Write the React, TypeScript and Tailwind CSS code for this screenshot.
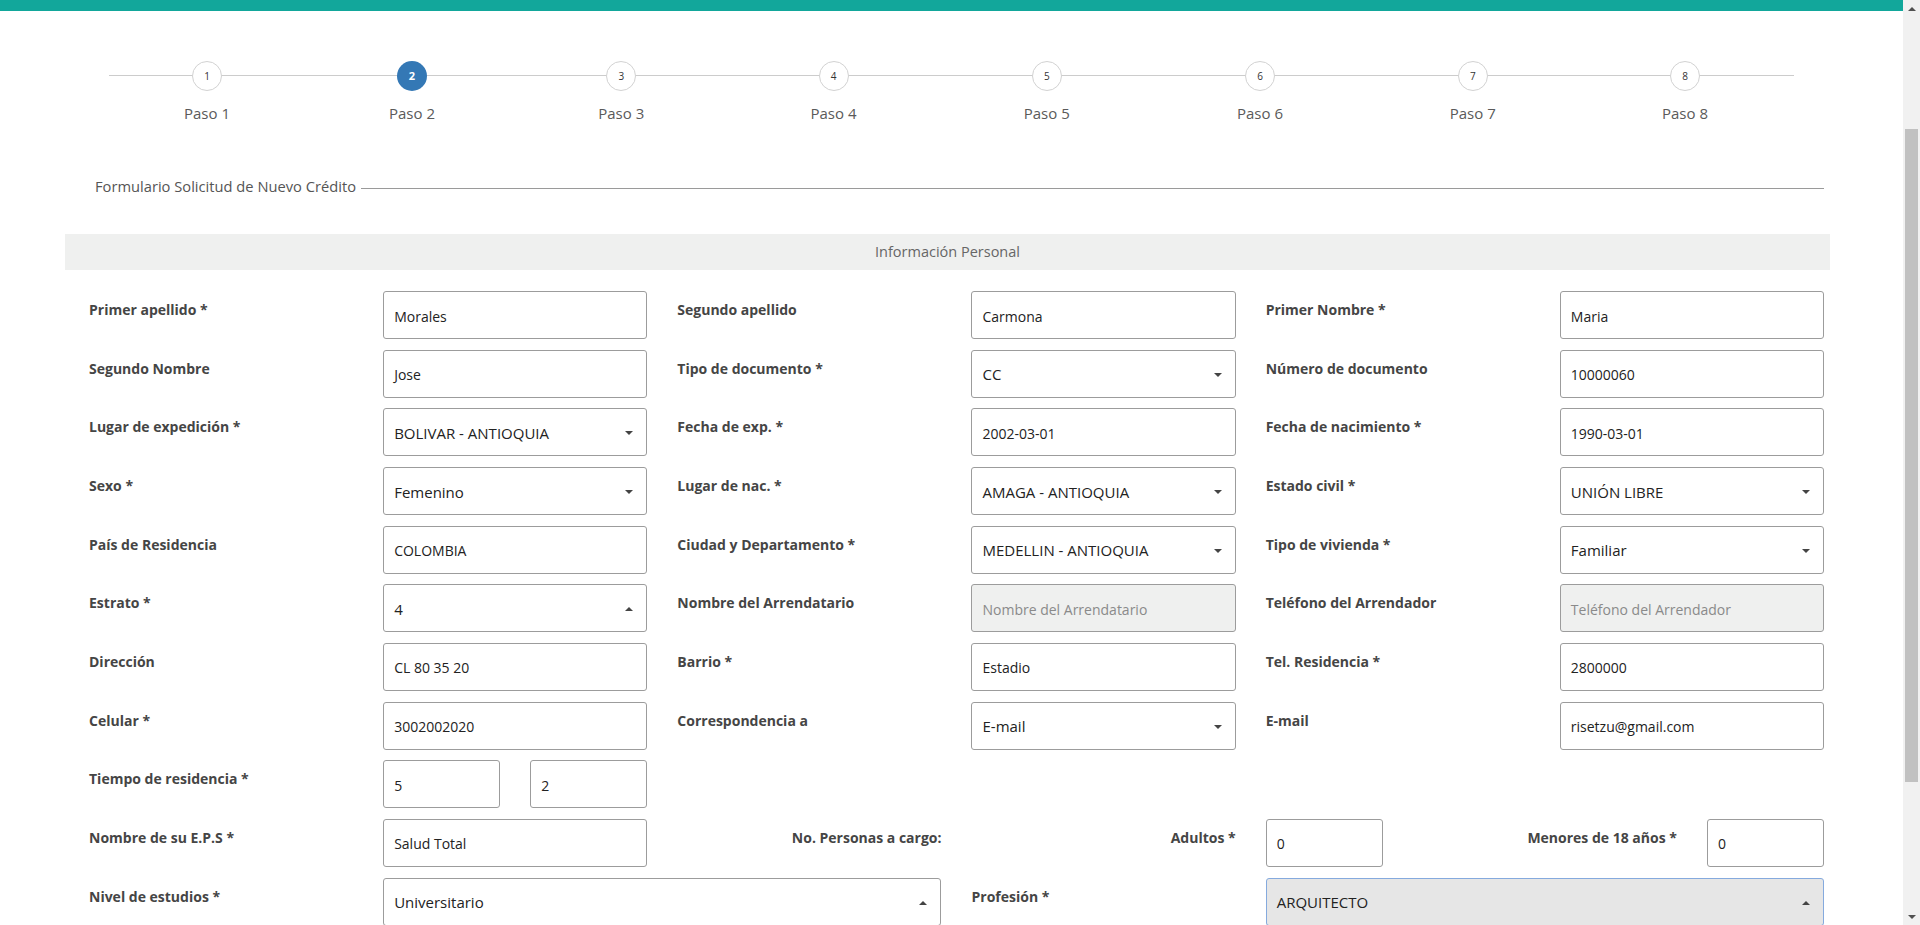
import React from "react";

type Cell =
  | { t: "label"; text: string; span?: number; right?: boolean }
  | { t: "input"; value: string; span?: number; mono?: boolean }
  | { t: "disabled"; placeholder: string; span?: number }
  | { t: "select"; value: string; span?: number; up?: boolean; focus?: boolean }
  | { t: "empty"; span: number };

const spanClass: Record<number, string> = {
  1: "col-span-1",
  2: "col-span-2",
  4: "col-span-4",
  6: "col-span-6",
  8: "col-span-8",
};

function Arrow({ up }: { up?: boolean }) {
  return (
    <svg width="8" height="4" viewBox="0 0 8 4" className="shrink-0">
      {up ? (
        <polygon points="0,4 8,4 4,0" fill="#444" />
      ) : (
        <polygon points="0,0 8,0 4,4" fill="#444" />
      )}
    </svg>
  );
}

function Field({ c }: { c: Cell }) {
  const span = spanClass[c.span ?? 2];
  if (c.t === "empty") return <div className={span} />;
  if (c.t === "label") {
    return (
      <div
        className={`${span} pl-6 pr-[6px] pt-[9px] text-[14px] font-bold leading-5 text-[#454545] ${
          c.right ? "text-right" : ""
        }`}
      >
        {c.text}
      </div>
    );
  }
  if (c.t === "input") {
    return (
      <div className={`${span} pl-6 pr-[6px]`}>
        <div className="flex h-[48px] items-center rounded-[3px] border border-[#9c9c9c] bg-white px-[10px] pt-[2px] text-[14px] text-[#222]">
          {c.value}
        </div>
      </div>
    );
  }
  if (c.t === "disabled") {
    return (
      <div className={`${span} pl-6 pr-[6px]`}>
        <div className="flex h-[48px] items-center rounded-[3px] border border-[#9c9c9c] bg-[#eff0ef] px-[10px] pt-[2px] text-[14px] text-[#8a8a8a]">
          {c.placeholder}
        </div>
      </div>
    );
  }
  return (
    <div className={`${span} pl-6 pr-[6px]`}>
      <div
        className={`flex h-[48px] items-center justify-between rounded-[3px] border pl-[10px] pr-[13px] pt-[2px] text-[15px] text-[#222] ${
          c.focus ? "border-[#85aade] bg-[#e6e6e6]" : "border-[#9c9c9c] bg-white"
        }`}
      >
        <span>{c.value}</span>
        <Arrow up={c.up} />
      </div>
    </div>
  );
}

const L = (text: string, extra: Partial<{ span: number; right: boolean }> = {}): Cell => ({
  t: "label",
  text,
  ...extra,
});
const I = (value: string, span = 2): Cell => ({ t: "input", value, span });
const S = (value: string, extra: Partial<{ span: number; up: boolean; focus: boolean }> = {}): Cell => ({
  t: "select",
  value,
  ...extra,
});
const D = (placeholder: string): Cell => ({ t: "disabled", placeholder });

const rows: Cell[][] = [
  [L("Primer apellido *"), I("Morales"), L("Segundo apellido"), I("Carmona"), L("Primer Nombre *"), I("Maria")],
  [L("Segundo Nombre"), I("Jose"), L("Tipo de documento *"), S("CC"), L("Número de documento"), I("10000060")],
  [L("Lugar de expedición *"), S("BOLIVAR - ANTIOQUIA"), L("Fecha de exp. *"), I("2002-03-01"), L("Fecha de nacimiento *"), I("1990-03-01")],
  [L("Sexo *"), S("Femenino"), L("Lugar de nac. *"), S("AMAGA - ANTIOQUIA"), L("Estado civil *"), S("UNIÓN LIBRE")],
  [L("País de Residencia"), I("COLOMBIA"), L("Ciudad y Departamento *"), S("MEDELLIN - ANTIOQUIA"), L("Tipo de vivienda *"), S("Familiar")],
  [L("Estrato *"), S("4", { up: true }), L("Nombre del Arrendatario"), D("Nombre del Arrendatario"), L("Teléfono del Arrendador"), D("Teléfono del Arrendador")],
  [L("Dirección"), I("CL 80 35 20"), L("Barrio *"), I("Estadio"), L("Tel. Residencia *"), I("2800000")],
  [L("Celular *"), I("3002002020"), L("Correspondencia a"), S("E-mail"), L("E-mail"), I("risetzu@gmail.com")],
  [L("Tiempo de residencia *"), I("5", 1), I("2", 1), { t: "empty", span: 8 } as Cell],
  [
    L("Nombre de su E.P.S *"),
    I("Salud Total"),
    L("No. Personas a cargo:", { right: true }),
    L("Adultos *", { right: true }),
    I("0", 1),
    L("Menores de 18 años *", { right: true }),
    I("0", 1),
  ],
  [L("Nivel de estudios *"), S("Universitario", { span: 4, up: true }), L("Profesión *"), S("ARQUITECTO", { span: 4, up: true, focus: true })],
];

function Stepper() {
  const steps = [1, 2, 3, 4, 5, 6, 7, 8];
  return (
    <div className="relative ml-[105.5px] mt-[50px] w-[1685.5px]">
      <div className="absolute left-[3.5px] top-[14px] h-px w-[1685px] bg-[#cccccc]" />
      <div className="grid grid-cols-[203px_207px_211.5px_213px_213.5px_213px_212.5px_212px]">
        {steps.map((n) => (
          <div key={n} className="flex flex-col items-center">
            {n === 2 ? (
              <div className="relative z-10 flex h-[30px] w-[30px] items-center justify-center rounded-full bg-[#3478b5] text-[11px] font-bold text-white">
                {n}
              </div>
            ) : (
              <div className="relative z-10 flex h-[30px] w-[30px] items-center justify-center rounded-full border border-[#d2d2d2] bg-white text-[10px] text-[#333]">
                {n}
              </div>
            )}
            <div className="mt-[12px] text-[15px] leading-5 text-[#5a5a5a]">Paso {n}</div>
          </div>
        ))}
      </div>
    </div>
  );
}

function Scrollbar() {
  return (
    <div className="flex h-[925px] w-[17px] shrink-0 flex-col bg-[#f1f1f1]">
      <div className="flex h-[17px] items-center justify-center">
        <svg width="8" height="4" viewBox="0 0 8 4">
          <polygon points="0,4 8,4 4,0" fill="#505050" />
        </svg>
      </div>
      <div className="h-[112px]" />
      <div className="mx-[2px] h-[653px] bg-[#c1c1c1]" />
      <div className="flex-1" />
      <div className="flex h-[17px] items-center justify-center">
        <svg width="8" height="4" viewBox="0 0 8 4">
          <polygon points="0,0 8,0 4,4" fill="#505050" />
        </svg>
      </div>
    </div>
  );
}

export default function App() {
  return (
    <div className="flex h-[925px] w-[1920px] overflow-hidden bg-white font-['Open_Sans',sans-serif]">
      <div className="flex min-w-0 flex-1 flex-col overflow-hidden">
        <div className="h-[11px] shrink-0 bg-[#12a79b]" />
        <Stepper />
        <div className="ml-[95px] mt-[53px] flex w-[1729px] items-center">
          <span className="whitespace-nowrap text-[14.7px] leading-5 text-[#555]">
            Formulario Solicitud de Nuevo Crédito
          </span>
          <div className="ml-[5px] mt-[4px] h-px flex-1 bg-[#9a9a9a]" />
        </div>
        <div className="ml-[65px] mt-[38px] flex h-[36px] w-[1765px] shrink-0 items-center justify-center bg-[#eff0ef] text-[14.5px] text-[#666]">
          Información Personal
        </div>
        <div className="ml-[65px] mt-[21px] grid w-[1765px] grid-cols-12 gap-y-[10.66px]">
          {rows.map((r, i) => (
            <React.Fragment key={i}>
              {r.map((c, j) => (
                <Field key={j} c={c} />
              ))}
            </React.Fragment>
          ))}
        </div>
      </div>
      <Scrollbar />
    </div>
  );
}
